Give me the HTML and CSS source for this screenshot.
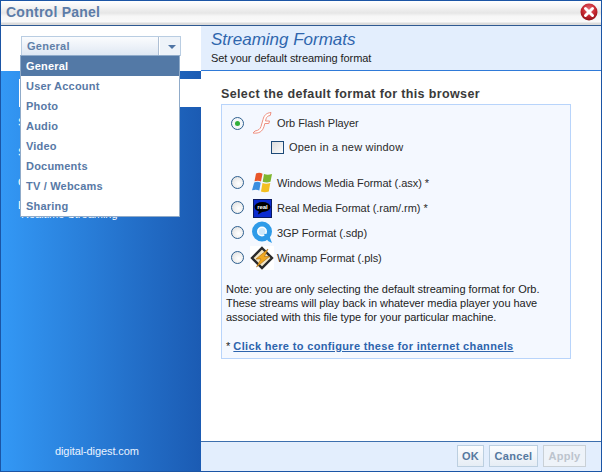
FILE: index.html
```html
<!DOCTYPE html>
<html lang="en">
<head>
<meta charset="utf-8">
<title>Control Panel</title>
<link rel="stylesheet" href="styles.css">
</head>
<body>
<div class="window">
  <header class="titlebar">
    <span class="title">Control Panel</span>
    <svg class="close" width="18" height="18" viewBox="0 0 18 18" aria-label="Close">
      <defs><radialGradient id="cg" cx="50%" cy="35%" r="65%"><stop offset="0" stop-color="#e8717a"/><stop offset="0.6" stop-color="#c5262e"/><stop offset="1" stop-color="#8f1218"/></radialGradient></defs>
      <circle cx="9" cy="9" r="8.5" fill="url(#cg)"/>
      <path d="M5.5 5.5l7 7M12.5 5.5l-7 7" stroke="#fff" stroke-width="3" stroke-linecap="round"/>
    </svg>
  </header>
  <div class="main">
    <aside class="sidebar">
      <div class="sidebar-top">
        <div class="select">
          <span class="select-label">General</span>
          <span class="select-arrow"></span>
        </div>
      </div>
      <div class="sidebar-body">
        <div class="nav-current"></div>
        <ul class="nav">
          <li>Streaming</li>
          <li>Security</li>
          <li>Cache</li>
          <li class="nav-short">Live</li>
          <li class="nav-tail">Realtime Streaming</li>
        </ul>
        <div class="credit">digital-digest.com</div>
      </div>
      <ul class="menu">
        <li class="active">General</li>
        <li>User Account</li>
        <li>Photo</li>
        <li>Audio</li>
        <li>Video</li>
        <li>Documents</li>
        <li>TV / Webcams</li>
        <li>Sharing</li>
      </ul>
    </aside>
    <section class="panel">
      <div class="panel-head">
        <h1>Streaming Formats</h1>
        <p>Set your default streaming format</p>
      </div>
      <div class="panel-body">
        <h2>Select the default format for this browser</h2>
        <div class="box">
          <div class="row row-first">
            <span class="radio on"></span>
            <svg class="icon" width="24" height="24" viewBox="0 0 24 24"><path d="M21 1.500c-5 .5-7 3-8 7l-2 7c-.8 2.500-2.500 4-6 4.500l-2 2c6 .8 9.500-1.500 11-6.500l.8-3h4l.7-2.500h-4l.7-2.500c.5-1.800 2-2.800 4-3z" fill="#fff" stroke="#ee8f80" stroke-width="1"/></svg>
            <span>Orb Flash Player</span>
          </div>
          <div class="check-row">
            <span class="check"></span>
            <span>Open in a new window</span>
          </div>
          <div class="row row-gap">
            <span class="radio"></span>
            <svg class="icon" width="24" height="24" viewBox="0 0 24 24"><path d="M6 2.500c2.500-1 4.500-.8 6.500.2L11 10.500c-2-1-4-1.200-6.500-.2z" fill="#e8562a"/><path d="M14 3c2.500 1 5 1 8 0l-1.500 7.800c-2.500 1-5 1-7.800 0z" fill="#7fb62f"/><path d="M4.200 11.500c2.500-1 4.500-.8 6.500.2L9.300 19.500c-2-1-4-1.200-7.300-.2z" fill="#3c8fe0"/><path d="M12.500 12.100c2.300 1 5 1 7.800 0l-1.500 8.400c-2.500 1-5.500 1-7.800 0z" fill="#f4c020"/></svg>
            <span>Windows Media Format (.asx) *</span>
          </div>
          <div class="row">
            <span class="radio"></span>
            <svg class="icon" width="24" height="24" viewBox="0 0 24 24"><rect x="3.500" y="3.500" width="18" height="18" fill="#0b2bd0" stroke="#0a1a60"/><ellipse cx="12.500" cy="11" rx="8" ry="5" fill="#000"/><path d="M9 14.500l-1 4 5-3z" fill="#000"/><text class="real-text" x="12.500" y="13" text-anchor="middle">real</text></svg>
            <span>Real Media Format (.ram/.rm) *</span>
          </div>
          <div class="row">
            <span class="radio"></span>
            <svg class="icon" width="24" height="24" viewBox="0 0 24 24"><circle cx="12" cy="10.500" r="7.500" fill="#fff" stroke="#2f9be8" stroke-width="5"/><path d="M13 12l5 8 4 2-3-8z" fill="#2f9be8"/><circle cx="12" cy="10.500" r="3.500" fill="#cfe9fb"/></svg>
            <span>3GP Format (.sdp)</span>
          </div>
          <div class="row">
            <span class="radio"></span>
            <svg class="icon icon-white" width="24" height="24" viewBox="0 0 24 24"><path d="M12 2l10 10-10 10-10-10z" fill="#f3e6c4" stroke="#2a2a2a" stroke-width="2.400"/><path d="M18 3L6 13h5L6.500 21l13-10.500h-5z" fill="#f0a820" stroke="#a86a10" stroke-width=".6"/></svg>
            <span>Winamp Format (.pls)</span>
          </div>
          <p class="note">Note: you are only selecting the default streaming format for Orb.<br>These streams will play back in whatever media player you have<br>associated with this file type for your particular machine.</p>
          <p class="link-line">* <a href="#">Click here to configure these for internet channels</a></p>
        </div>
      </div>
      <footer class="panel-foot">
        <button class="btn" type="button">OK</button>
        <button class="btn" type="button">Cancel</button>
        <button class="btn disabled" type="button">Apply</button>
      </footer>
    </section>
  </div>
</div>
</body>
</html>
```

FILE: styles.css
```css
* { box-sizing: border-box; }
html, body { margin: 0; padding: 0; }
body { width: 602px; height: 472px; overflow: hidden; background: #fff; font-family: "Liberation Sans", Arial, sans-serif; font-size: 11px; color: #2a2a2a; }
.window { width: 602px; height: 472px; border: 1px solid #1b55a5; display: flex; flex-direction: column; background: #fff; }
.titlebar { height: 25px; flex: none; display: flex; align-items: center; justify-content: space-between; padding: 0 3px 3px 5px; background: linear-gradient(#fff 0, #f4f4f4 6px, #e6e6e6 12px, #f6f6f6 15px, #fafafa 21px, #dcdcdc 22px, #dcdcdc 24px); border-bottom: 1px solid #2f5a92; }
.title { font-size: 14px; font-weight: bold; color: #5c7ca8; letter-spacing: 0.25px; }
.close { display: block; margin-top: 1px; }
.main { flex: 1; display: flex; min-height: 0; position: relative; }
.sidebar { width: 200px; flex: none; display: flex; flex-direction: column; position: relative; }
.sidebar-top { height: 45px; flex: none; padding: 10px 0 0 20px; background: #fff; }
.select { width: 160px; height: 20px; border: 1px solid #b9cde2; display: flex; justify-content: space-between; background: linear-gradient(#fbfcfe, #dfe8f3); }
.select-label { padding: 3px 0 0 5px; font-weight: bold; color: #5f7fa8; letter-spacing: 0.25px; }
.select-arrow { width: 22px; border-left: 1px solid #aebfd4; box-shadow: inset 1px 0 0 #fff; position: relative; background: #eef3f9; }
.select-arrow::after { content: ""; position: absolute; left: 9px; top: 8px; border: 4px solid transparent; border-top: 4px solid #4f74a4; border-bottom: 0; }
.sidebar-body { flex: 1; position: relative; padding-top: 8px; background: linear-gradient(90deg, #3398f5, #1b5bb3); color: #fff; }
.nav-current { height: 28px; margin-left: 18px; background: #fff; }
.nav { list-style: none; margin: 0; padding: 0 0 0 17px; }
.nav li { height: 30px; line-height: 30px; }
.nav .nav-short { height: 10px; line-height: 16px; }
.nav .nav-tail { height: 14px; line-height: 14px; padding-left: 3px; }
.credit { position: absolute; left: 54px; bottom: 14px; color: #eaf3ff; letter-spacing: -0.1px; }
.menu { position: absolute; left: 19px; top: 29px; width: 160px; margin: 0; padding: 0; list-style: none; background: #fff; border: 1px solid #90abc9; }
.menu li { height: 20px; line-height: 20px; padding-left: 5px; font-weight: bold; color: #5879a6; letter-spacing: 0.2px; }
.menu .active { background: #5379a6; color: #fff; }
.panel { flex: 1; display: flex; flex-direction: column; min-width: 0; }
.panel-head { height: 45px; flex: none; padding: 4px 0 0 10px; background: #e3eefd; border-bottom: 1px solid #2f7ad8; }
.panel-head h1 { margin: 0; font-size: 17px; font-weight: normal; font-style: italic; color: #2f66ad; line-height: 20px; }
.panel-head p { margin: 1px 0 0; font-size: 11px; color: #222; line-height: 14px; letter-spacing: -0.07px; }
.panel-body { flex: 1; padding: 15px 0 0 20px; min-height: 0; }
.panel-body h2 { margin: 0 0 2px; font-size: 12.5px; font-weight: bold; color: #3a3a3a; line-height: 16px; letter-spacing: 0.36px; }
.box { width: 350px; height: 255px; border: 1px solid #b8d4fb; background: #f4f8ff; padding: 6px 0 0 9px; }
.row { height: 25px; display: flex; align-items: center; color: #2a2a2a; letter-spacing: -0.05px; }
.row-first { height: 24px; }
.row-gap { margin-top: 11px; }
.radio { width: 13px; height: 13px; flex: none; border-radius: 50%; border: 1.5px solid #2d5f8f; background: radial-gradient(circle at 60% 60%, #fff 0, #f2f2f2 40%, #d8d8d8 100%); display: flex; align-items: center; justify-content: center; margin-right: 6px; }
.radio.on { background: #f3f6f9; }
.radio.on::after { content: ""; width: 5px; height: 5px; border-radius: 50%; background: #2fae3a; }
.icon { display: block; flex: none; margin-right: 3px; }
.icon-white { background: #fff; }
.real-text { font-family: "Liberation Sans", Arial, sans-serif; font-size: 6px; font-weight: bold; fill: #fff; }
.check-row { height: 24px; display: flex; align-items: center; gap: 5px; padding-left: 40px; letter-spacing: 0.18px; }
.check { width: 13px; height: 13px; flex: none; border: 1px solid #1d4a78; background: linear-gradient(135deg, #dcdcdc, #fdfdfd); }
.note { margin: 12px 0 0 -5px; padding: 0; line-height: 14px; letter-spacing: -0.04px; color: #222; }
.link-line { margin: 15px 0 0 -5px; line-height: 14px; color: #222; }
.link-line a { font-weight: bold; color: #2d64ad; letter-spacing: 0.34px; }
.panel-foot { height: 30px; flex: none; display: flex; justify-content: flex-end; align-items: flex-start; gap: 5px; padding: 3px 15px 0 0; background: #e3eefd; border-top: 1px solid #3d6fae; }
.btn { height: 22px; padding: 0; font: bold 11px "Liberation Sans", Arial, sans-serif; letter-spacing: 0.3px; color: #56789f; border: 1px solid #bccfe0; background: linear-gradient(#fbfcfe, #e6edf5); }
.btn:nth-child(1) { width: 27px; }
.btn:nth-child(2) { width: 49px; }
.btn:nth-child(3) { width: 43px; }
.btn.disabled { color: #bcc4cd; border-color: #c9d0d6; background: #eef3f9; }
```
